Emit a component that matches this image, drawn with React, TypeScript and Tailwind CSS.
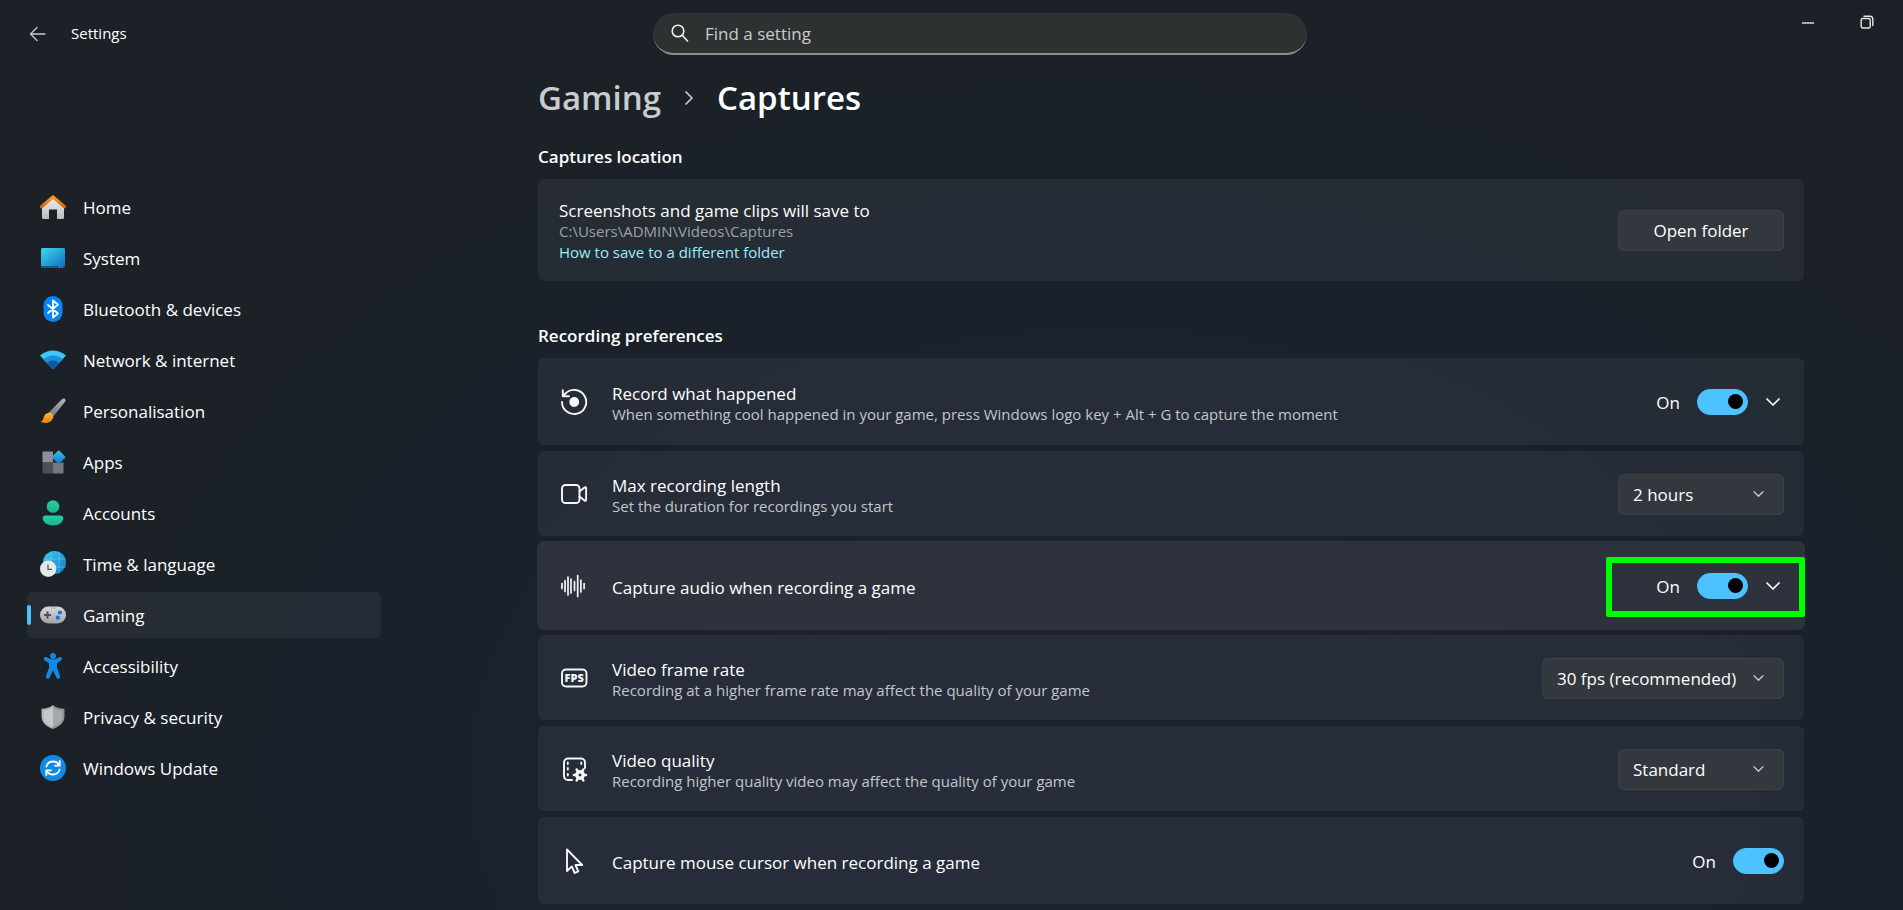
import React from "react";

type IconProps = { children: React.ReactNode };

const NavSvg: React.FC<IconProps> = ({ children }) => (
    <svg viewBox="0 0 26 26" className="size-[26px] shrink-0" fill="none" aria-hidden="true">
        {children}
    </svg>
);

const RowSvg: React.FC<IconProps> = ({ children }) => (
    <svg viewBox="0 0 28 28" className="size-7 shrink-0" fill="none" stroke="#f5f6f8" strokeWidth="1.9" strokeLinecap="round" strokeLinejoin="round" aria-hidden="true">
        {children}
    </svg>
);

const HomeIcon = () => (
    <NavSvg>
        <defs>
            <linearGradient id="homeWall" x1="0" y1="0" x2="0" y2="1"><stop stopColor="#f2f2f2" /><stop offset="1" stopColor="#b9bbbd" /></linearGradient>
            <linearGradient id="homeRoof" x1="0" y1="0" x2="0" y2="1"><stop stopColor="#ff9a1f" /><stop offset="1" stopColor="#d9620f" /></linearGradient>
        </defs>
        <path d="M2 11 13 2l11 9v12.500a1.500 1.500 0 0 1-1.500 1.500H17v-9.500H9V25H3.500A1.500 1.500 0 0 1 2 23.500z" fill="url(#homeWall)" />
        <path d="M1.500 12.800 13 3l11.500 9.800" stroke="url(#homeRoof)" strokeWidth="3.200" strokeLinecap="round" strokeLinejoin="round" />
    </NavSvg>
);

const SystemIcon = () => (
    <NavSvg>
        <defs>
            <linearGradient id="screen" x1="0" y1="0" x2="1" y2="1"><stop stopColor="#3ddaea" /><stop offset="1" stopColor="#1171c2" /></linearGradient>
        </defs>
        <rect x="1" y="3" width="24" height="20" rx="1.500" fill="#0d5a94" />
        <rect x="1" y="3" width="24" height="18" rx="1.500" fill="url(#screen)" />
        <path d="M19 22h1M21.500 22h1" stroke="#7fd4f5" strokeWidth="1" />
    </NavSvg>
);

const BluetoothIcon = () => (
    <NavSvg>
        <rect x="3.500" y="0" width="19" height="26" rx="9.500" fill="#0a84f5" />
        <path d="m8 9 10 8.500-5 4V4.500l5 4L8 17" stroke="#fff" strokeWidth="1.800" strokeLinejoin="round" strokeLinecap="round" />
    </NavSvg>
);

const NetworkIcon = () => (
    <NavSvg>
        <defs><clipPath id="fan"><path d="M0 8.500Q13-1.500 26 8.500L14 21.500q-1 1-2 0z" /></clipPath></defs>
        <g clipPath="url(#fan)">
            <circle cx="13" cy="22" r="24" fill="#3cc8f6" />
            <circle cx="13" cy="22" r="13.500" fill="#1b8fdc" />
            <circle cx="13" cy="22" r="8.500" fill="#1059a6" />
        </g>
    </NavSvg>
);

const PersonalisationIcon = () => (
    <NavSvg>
        <defs>
            <linearGradient id="handle" x1="1" y1="0" x2="0" y2="1"><stop stopColor="#b4b6ba" /><stop offset="1" stopColor="#6f7278" /></linearGradient>
            <linearGradient id="bristle" x1="0" y1="0" x2="0" y2="1"><stop stopColor="#ffb638" /><stop offset="1" stopColor="#ef7d10" /></linearGradient>
        </defs>
        <path d="M24.800.8c1 .8.9 2 .2 3L13.500 18.200 8.800 14.600 21.600 1.600c1-1 2.200-1.500 3.200-.8z" fill="url(#handle)" />
        <path d="M8.500 14.800c2-.8 4.800 1 4.800 3.700 0 3.800-4 6.500-8.300 6.500-2 0-3.500-.5-4.300-1.200 2-.8 2.400-2.200 3-4.500.6-2.300 2.300-3.900 4.800-4.500z" fill="url(#bristle)" />
    </NavSvg>
);

const AppsIcon = () => (
    <NavSvg>
        <defs>
            <linearGradient id="tile" x1="0" y1="0" x2="1" y2="1"><stop stopColor="#3fc5f5" /><stop offset="1" stopColor="#1273c9" /></linearGradient>
        </defs>
        <path d="M2.500 3.500a1 1 0 0 1 1-1H13v11H2.500z" fill="#8d9097" />
        <path d="M2.500 13.500H13v11H3.500a1 1 0 0 1-1-1z" fill="#4c4f55" />
        <path d="M13 13.500h10.500v10a1 1 0 0 1-1 1H13z" fill="#74777e" />
        <rect x="13.700" y="3.100" width="10" height="10" rx="1.200" transform="rotate(45 18.700 8.100)" fill="url(#tile)" />
    </NavSvg>
);

const AccountsIcon = () => (
    <NavSvg>
        <defs>
            <linearGradient id="person" x1="0" y1="0" x2="0" y2="1"><stop stopColor="#25cfa4" /><stop offset="1" stopColor="#1bb291" /></linearGradient>
        </defs>
        <circle cx="13" cy="6.500" r="6.300" fill="url(#person)" />
        <path d="M5.500 15.500h15c1.500 0 2.800 1 2.800 2.500 0 4.500-4.500 7.500-10.300 7.500S2.700 22.500 2.700 18c0-1.500 1.300-2.500 2.800-2.500z" fill="url(#person)" />
    </NavSvg>
);

const TimeIcon = () => (
    <NavSvg>
        <defs>
            <linearGradient id="globe" x1="0" y1="0" x2="1" y2="1"><stop stopColor="#34d2e6" /><stop offset="1" stopColor="#1673cc" /></linearGradient>
        </defs>
        <circle cx="14.500" cy="11.500" r="11.500" fill="url(#globe)" />
        <path d="M3.500 8h22M3.500 16h22M11 .5v22M19 1v21" stroke="#7fe0f2" strokeOpacity=".5" strokeWidth=".9" />
        <circle cx="8.200" cy="17.800" r="8.200" fill="#e6e7e9" />
        <path d="M8 13.500v4.800h4" stroke="#55585e" strokeWidth="1.300" />
    </NavSvg>
);

const GamingIcon = () => (
    <NavSvg>
        <defs>
            <linearGradient id="pad" x1="0" y1="0" x2="0" y2="1"><stop stopColor="#d8dadd" /><stop offset="1" stopColor="#a0a3a8" /></linearGradient>
        </defs>
        <rect x="0" y="4.500" width="26" height="17" rx="8.500" fill="url(#pad)" />
        <path d="M7.500 9.500v7M4 13h7" stroke="#4d5056" strokeWidth="2" />
        <path d="M11 6h1M14 6h1" stroke="#6b6e73" strokeWidth="1" />
        <circle cx="20" cy="10.500" r="2.100" fill="#1b76d2" />
        <circle cx="17.800" cy="15.700" r="2.100" fill="#1b76d2" />
    </NavSvg>
);

const AccessibilityIcon = () => (
    <NavSvg>
        <g fill="#1289e4">
            <circle cx="13" cy="3" r="2.900" />
            <path d="M4.700 4.300c.8-.7 1.500-.3 2.500.2 3.500 2.400 8.100 2.400 11.600 0 1-.5 1.800-.9 2.600-.2 1 .9.700 2.200-.4 3L17 10.200v4.600l3 8.300c.4 1.300-.2 2.300-1.300 2.600-1 .3-1.900-.2-2.300-1.200L13 17.500l-3.400 7c-.4 1-1.300 1.500-2.300 1.200-1.100-.3-1.700-1.300-1.300-2.600l3-8.300v-4.600L4.500 7.300C3.500 6.500 3.700 5.200 4.700 4.300z" />
        </g>
    </NavSvg>
);

const PrivacyIcon = () => (
    <NavSvg>
        <path d="M13 1c3 2.500 7 3.800 11.500 3.800v7.500c0 6.200-4.500 10.200-11.500 12.700z" fill="#8e9196" />
        <path d="M13 1C10 3.500 6 4.800 1.500 4.800v7.500C1.500 18.500 6 22.500 13 25z" fill="#b0b2b6" />
        <path d="M13 3.200c2.800 2.100 6 3.200 9.500 3.400v5.700c0 5-3.300 8.200-9.500 10.500z" fill="#a5a8ad" />
        <path d="M13 3.200C10.200 5.300 7 6.400 3.500 6.600v5.700c0 5 3.300 8.200 9.500 10.500z" fill="#c6c8cb" />
    </NavSvg>
);

const UpdateIcon = () => (
    <NavSvg>
        <circle cx="13" cy="13" r="13" fill="#118ae6" />
        <path d="M6.300 11.500C7.500 8 10 6.500 13 6.500c2.800 0 5 1.300 6.500 3.800M19.700 6v4.700H15M19.700 14.500c-1.200 3.500-3.700 5-6.700 5-2.800 0-5-1.300-6.500-3.800M6.300 20v-4.700H11" stroke="#fff" strokeWidth="1.800" strokeLinecap="round" strokeLinejoin="round" />
    </NavSvg>
);

const RecordIcon = () => (
    <RowSvg>
        <path d="M2 14A12.100 12.100 0 1 0 5.500 5.500L3 8M2.800 2.200V8.300H9" />
        <circle cx="14.200" cy="14" r="4.900" fill="#f5f6f8" stroke="none" />
    </RowSvg>
);

const CameraIcon = () => (
    <RowSvg>
        <rect x="2" y="5" width="17.500" height="18" rx="3.500" />
        <path d="m19.500 11.500 5-4c.8-.6 1.600-.3 1.600.6v11.800c0 .9-.8 1.200-1.600.6l-5-4" />
    </RowSvg>
);

const AudioIcon = () => (
    <RowSvg>
        <path d="M2 11.500v5M5 8.500v11M8 5v18M11 7v14M14.500 9.500v9M17.700 3.500v21M20.900 8v12M24.100 11.500v5" strokeWidth="1.700" />
    </RowSvg>
);

const FpsIcon = () => (
    <RowSvg>
        <rect x="2" y="5.500" width="24.500" height="17" rx="4" />
        <text x="14.200" y="18" textAnchor="middle" fontSize="11" fontWeight="800" fill="#f5f6f8" stroke="none">FPS</text>
    </RowSvg>
);

const QualityIcon = () => (
    <RowSvg>
        <path d="M12 25H8a4 4 0 0 1-4-4V7.500a4 4 0 0 1 4-4h13a4 4 0 0 1 4 4V13" />
        <path d="M7.800 7.500v1.500M7.800 13v1.500M7.800 19v1.500M21.300 7.500v1.500" />
        <circle cx="20" cy="20" r="3.200" strokeWidth="3.400" />
        <path d="M16.700 14.500l1 2M23.300 14.500l-1 2M14 20h2M24 20h2M16.700 25.500l1-2M23.300 25.500l-1-2" strokeWidth="2.600" />
    </RowSvg>
);

const CursorIcon = () => (
    <RowSvg>
        <path d="M7 2.500v21.500l4.800-4.600 2.900 6.600 3.600-1.600-2.900-6.400h6.800z" />
    </RowSvg>
);

const Chevron: React.FC<{ className: string }> = ({ className }) => (
    <svg viewBox="0 0 14 8" className={className} fill="none" stroke="currentColor" strokeLinecap="round" strokeLinejoin="round" aria-hidden="true">
        <path d="m1 1 6 6 6-6" strokeWidth="1.700" />
    </svg>
);

const navItems = [
    { label: "Home", icon: HomeIcon },
    { label: "System", icon: SystemIcon },
    { label: "Bluetooth & devices", icon: BluetoothIcon },
    { label: "Network & internet", icon: NetworkIcon },
    { label: "Personalisation", icon: PersonalisationIcon },
    { label: "Apps", icon: AppsIcon },
    { label: "Accounts", icon: AccountsIcon },
    { label: "Time & language", icon: TimeIcon },
    { label: "Gaming", icon: GamingIcon, active: true },
    { label: "Accessibility", icon: AccessibilityIcon },
    { label: "Privacy & security", icon: PrivacyIcon },
    { label: "Windows Update", icon: UpdateIcon },
];

const Toggle: React.FC<{ id: string }> = ({ id }) => (
    <div className="flex items-center gap-[17px]">
        <span className="pt-0.5">On</span>
        <input
            id={id}
            type="checkbox"
            role="switch"
            defaultChecked
            className="flex h-[26px] w-[51px] appearance-none items-center rounded-full border border-[#9a9da3] px-1 before:size-[15px] before:rounded-full before:bg-[#c8cacd] checked:justify-end checked:border-[#4cc2ff] checked:bg-[#4cc2ff] checked:before:bg-black"
        />
    </div>
);

const ExpandButton: React.FC<{ label: string }> = ({ label }) => (
    <button type="button" aria-label={label} className="ml-[18px] mr-1 flex h-8 items-center">
        <Chevron className="h-2 w-3.5 text-white" />
    </button>
);

const Dropdown: React.FC<{ id: string; options: string[]; width: string }> = ({ id, options, width }) => (
    <div className={`relative mt-0.5 ${width}`}>
        <select id={id} className="h-[41px] w-full appearance-none rounded-md border border-white/5 bg-[#33373e] pl-[14px] pr-9 text-[17px] text-white">
            {options.map((option) => (
                <option key={option}>{option}</option>
            ))}
        </select>
        <Chevron className="pointer-events-none absolute right-5 top-[17px] h-1.5 w-[11px] text-[#c9cbce]" />
    </div>
);

type SettingRowProps = {
    id: string;
    icon: React.FC;
    title: string;
    description?: string;
    height: string;
    highlighted?: boolean;
    children: React.ReactNode;
};

const SettingRow: React.FC<SettingRowProps> = ({ id, icon: Icon, title, description, height, highlighted, children }) => (
    <div
        className={`relative flex items-center rounded-md pl-[22px] pr-5 ${height} ${
            highlighted ? "bg-[#2e323c] ring-1 ring-[#2e323c]" : "bg-white/5"
        }`}
    >
        <Icon />
        <div className="ml-6 flex-1 pt-1">
            <label htmlFor={id} className="block leading-[21px]">{title}</label>
            {description && <p className="text-[15px] leading-[21px] text-[#c3c6cb]">{description}</p>}
        </div>
        {children}
        {highlighted && (
            <div className="pointer-events-none absolute -right-px top-[15px] h-[60px] w-[199px] rounded-xs border-6 border-[#00ff00]" />
        )}
    </div>
);

const App: React.FC = () => {
    return (
        <div className="min-h-screen bg-[#1b2127] bg-[radial-gradient(ellipse_at_58%_85%,#1c2231_0%,#1b212e_35%,#1b2127_65%)] font-['Open_Sans',sans-serif] text-[17px] text-white">
            {/* Title bar */}
            <header className="grid grid-cols-[minmax(0,1fr)_654px_596px]">
                <div className="flex items-center pl-[29px] pt-3 text-[15px]">
                    <button type="button" aria-label="Back">
                        <svg viewBox="0 0 17 16" className="h-4 w-[17px]" fill="none" stroke="#c5c8ca" strokeWidth="1.4" strokeLinecap="round" strokeLinejoin="round">
                            <path d="M16 8H1.500M8 1.500 1.500 8 8 14.500" />
                        </svg>
                    </button>
                    <span className="ml-[25px]">Settings</span>
                </div>
                <label className="mt-[13px] flex h-[42px] items-center overflow-hidden rounded-full border-b-2 border-[#8b8e90] bg-[#2e3132] pl-[18px]">
                    <svg viewBox="0 0 18 18" className="size-[18px]" fill="none" stroke="#f0f1f2" strokeWidth="1.600" strokeLinecap="round">
                        <circle cx="7" cy="7" r="5.800" />
                        <path d="m11.300 11.300 5.200 5.700" />
                    </svg>
                    <input type="search" aria-label="Find a setting" placeholder="Find a setting" className="ml-4 flex-1 bg-transparent pt-0.5 text-[17px] outline-none placeholder:text-[#c9cbcb]" />
                </label>
                <div className="flex items-start justify-end gap-[45px] pr-[29px] pt-[15px]">
                    <button type="button" aria-label="Minimise">
                        <svg viewBox="0 0 14 14" className="size-3.5" stroke="#e4e6e7" strokeWidth="1.400"><path d="M1 8h12" /></svg>
                    </button>
                    <button type="button" aria-label="Restore">
                        <svg viewBox="0 0 14 14" className="size-3.5" fill="none" stroke="#e4e6e7" strokeWidth="1.400">
                            <rect x="1.200" y="3.500" width="9" height="9.500" rx="1.500" />
                            <path d="M4 1.200h6A2.800 2.800 0 0 1 12.800 4v6.500" strokeLinecap="round" />
                        </svg>
                    </button>
                </div>
            </header>

            <div className="flex">
                {/* Sidebar */}
                <aside className="w-[537px] shrink-0 pl-[27px] pt-[129px]">
                    <nav className="flex w-[354px] flex-col gap-[5px]">
                        {navItems.map(({ label, icon: Icon, active }) => (
                            <a
                                key={label}
                                href="#"
                                aria-current={active ? "page" : undefined}
                                className={`relative flex h-[46px] items-center rounded-md pl-[13px] ${active ? "bg-white/5" : ""}`}
                            >
                                {active && <span className="absolute left-0 h-5 w-1 rounded-full bg-[#4cc2ff]" />}
                                <Icon />
                                <span className="ml-[17px] pt-0.5">{label}</span>
                            </a>
                        ))}
                    </nav>
                </aside>

                {/* Captures page */}
                <main className="min-w-0 flex-1 pl-px pr-[99px] pt-[22px]">
                    <h1 className="flex items-center text-[33px] font-semibold leading-[42px]">
                        <a href="#" className="text-[#c9cccf]">Gaming</a>
                        <Chevron className="mx-[21px] h-2 w-3.5 -rotate-90 text-[#c9cccf]" />
                        <span>Captures</span>
                    </h1>

                    <h2 className="mt-[26px] text-[17px] font-semibold leading-6">Captures location</h2>
                    <section className="mt-2.5 flex min-h-[102px] items-center justify-between rounded-md bg-white/5 pl-[21px] pr-5">
                        <div className="pt-0.5">
                            <p className="leading-[21px]">Screenshots and game clips will save to</p>
                            <p className="text-[15px] leading-[21px] text-[#9ea1a5]">C:\Users\ADMIN\Videos\Captures</p>
                            <a href="#" className="block text-[15px] leading-[21px] text-[#99ebff]">How to save to a different folder</a>
                        </div>
                        <button type="button" className="h-[41px] w-[166px] rounded-md border border-white/5 bg-[#33373e] pt-0.5">Open folder</button>
                    </section>

                    <h2 className="mt-[43px] text-[17px] font-semibold leading-6">Recording preferences</h2>
                    <section className="mt-2.5 flex flex-col gap-1.5 pb-1.5">
                        <SettingRow id="record" height="min-h-[87px]" icon={RecordIcon} title="Record what happened" description="When something cool happened in your game, press Windows logo key + Alt + G to capture the moment">
                            <Toggle id="record" />
                            <ExpandButton label="More options for recording what happened" />
                        </SettingRow>
                        <SettingRow id="length" height="min-h-[85px]" icon={CameraIcon} title="Max recording length" description="Set the duration for recordings you start">
                            <Dropdown id="length" width="w-[166px]" options={["2 hours", "1 hour", "30 minutes"]} />
                        </SettingRow>
                        <SettingRow id="audio" height="min-h-[87px]" icon={AudioIcon} title="Capture audio when recording a game" highlighted>
                            <Toggle id="audio" />
                            <ExpandButton label="More audio options" />
                        </SettingRow>
                        <SettingRow id="fps" height="min-h-[85px]" icon={FpsIcon} title="Video frame rate" description="Recording at a higher frame rate may affect the quality of your game">
                            <Dropdown id="fps" width="w-[242px]" options={["30 fps (recommended)", "60 fps"]} />
                        </SettingRow>
                        <SettingRow id="quality" height="min-h-[85px]" icon={QualityIcon} title="Video quality" description="Recording higher quality video may affect the quality of your game">
                            <Dropdown id="quality" width="w-[166px]" options={["Standard", "High"]} />
                        </SettingRow>
                        <SettingRow id="cursor" height="min-h-[87px]" icon={CursorIcon} title="Capture mouse cursor when recording a game">
                            <Toggle id="cursor" />
                        </SettingRow>
                    </section>
                </main>
            </div>
        </div>
    );
};

export default App;
